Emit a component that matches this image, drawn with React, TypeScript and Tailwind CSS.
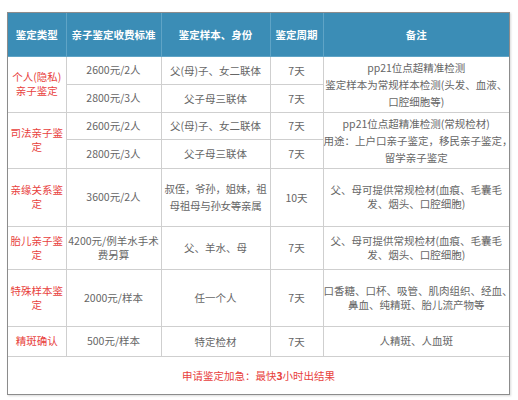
import React from "react";

type Row = {
  type?: React.ReactNode;
  typeSpan?: number;
  price: React.ReactNode;
  sample: React.ReactNode;
  days: string;
  note?: React.ReactNode;
  noteSpan?: number;
  h: string;
};

const rows: Row[] = [
  {
    type: (
      <>
        个人(隐私)
        <br />
        亲子鉴定
      </>
    ),
    typeSpan: 2,
    price: "2600元/2人",
    sample: "父(母)子、女二联体",
    days: "7天",
    note: (
      <span className="leading-[17px] block">
        pp21位点超精准检测
        <br />
        鉴定样本为常规样本检测(头发、血液、
        <br />
        口腔细胞等)
      </span>
    ),
    noteSpan: 2,
    h: "h-[28px]",
  },
  { price: "2800元/3人", sample: "父子母三联体", days: "7天", h: "h-[28px]" },
  {
    type: (
      <>
        司法亲子鉴
        <br />定
      </>
    ),
    typeSpan: 2,
    price: "2600元/2人",
    sample: "父(母)子、女二联体",
    days: "7天",
    note: (
      <span className="leading-[17px] block">
        pp21位点超精准检测(常规检材)
        <br />
        用途：上户口亲子鉴定，移民亲子鉴定，
        <br />
        留学亲子鉴定
      </span>
    ),
    noteSpan: 2,
    h: "h-[27px]",
  },
  { price: "2800元/3人", sample: "父子母三联体", days: "7天", h: "h-[29px]" },
  {
    type: (
      <>
        亲缘关系鉴
        <br />定
      </>
    ),
    price: "3600元/2人",
    sample: (
      <span className="block leading-[17px] tracking-[-0.3px]">
        叔侄，爷孙，姐妹，祖
        <br />
        母祖母与孙女等亲属
      </span>
    ),
    days: "10天",
    note: (
      <>
        父、母可提供常规检材(血痕、毛囊毛
        <br />
        发、烟头、口腔细胞)
      </>
    ),
    h: "h-[58px]",
  },
  {
    type: (
      <>
        胎儿亲子鉴
        <br />定
      </>
    ),
    price: (
      <>
        4200元/例羊水手术
        <br />
        费另算
      </>
    ),
    sample: "父、羊水、母",
    days: "7天",
    note: (
      <>
        父、母可提供常规检材(血痕、毛囊毛
        <br />
        发、烟头、口腔细胞)
      </>
    ),
    h: "h-[43px]",
  },
  {
    type: (
      <>
        特殊样本鉴
        <br />定
      </>
    ),
    price: "2000元/样本",
    sample: "任一个人",
    days: "7天",
    note: (
      <>
        口香糖、口杯、吸管、肌肉组织、经血、
        <br />
        鼻血、纯精斑、胎儿流产物等
      </>
    ),
    h: "h-[57px]",
  },
  {
    type: "精斑确认",
    price: "500元/样本",
    sample: "特定检材",
    days: "7天",
    note: "人精斑、人血斑",
    h: "h-[30px]",
  },
];

const td = "border border-[#cfcfcf] text-center align-middle whitespace-nowrap p-0";
const th = "border border-[#5fa4c6] text-center align-middle font-bold text-white whitespace-nowrap p-0";

export default function App() {
  return (
    <div
      className="w-[518px] h-[400px] bg-white pt-[12px] pl-[7px]"
      style={{ fontFamily: '"Noto Sans CJK SC", "Noto Sans", sans-serif' }}
    >
      <div className="w-[503px] border border-[#8c8c8c] shadow-[1px_1px_2px_rgba(0,0,0,0.15)]">
        <table className="w-full table-fixed border-collapse border-hidden text-[10.5px] leading-[15px] text-[#666]">
          <colgroup>
            <col className="w-[58px]" />
            <col className="w-[95px]" />
            <col className="w-[109px]" />
            <col className="w-[53px]" />
            <col />
          </colgroup>
          <thead>
            <tr className="h-[43px] bg-[#3b8db6]">
              <th className={th}>鉴定类型</th>
              <th className={th}>亲子鉴定收费标准</th>
              <th className={th}>鉴定样本、身份</th>
              <th className={th}>鉴定周期</th>
              <th className={th}>备注</th>
            </tr>
          </thead>
          <tbody>
            {rows.map((r, i) => (
              <tr key={i} className={r.h}>
                {r.type !== undefined && (
                  <td rowSpan={r.typeSpan} className={`${td} text-[#e8413d] leading-[14px]`}>
                    {r.type}
                  </td>
                )}
                <td className={`${td} leading-[14px]`}>{r.price}</td>
                <td className={td}>{r.sample}</td>
                <td className={td}>{r.days}</td>
                {r.note !== undefined && (
                  <td rowSpan={r.noteSpan} className={`${td} leading-[14px]`}>
                    {r.note}
                  </td>
                )}
              </tr>
            ))}
            <tr className="h-[38px]">
              <td colSpan={5} className={`${td} text-[#e8413d]`}>
                申请鉴定加急：最快<span className="font-bold">3</span>小时出结果
              </td>
            </tr>
          </tbody>
        </table>
      </div>
    </div>
  );
}
